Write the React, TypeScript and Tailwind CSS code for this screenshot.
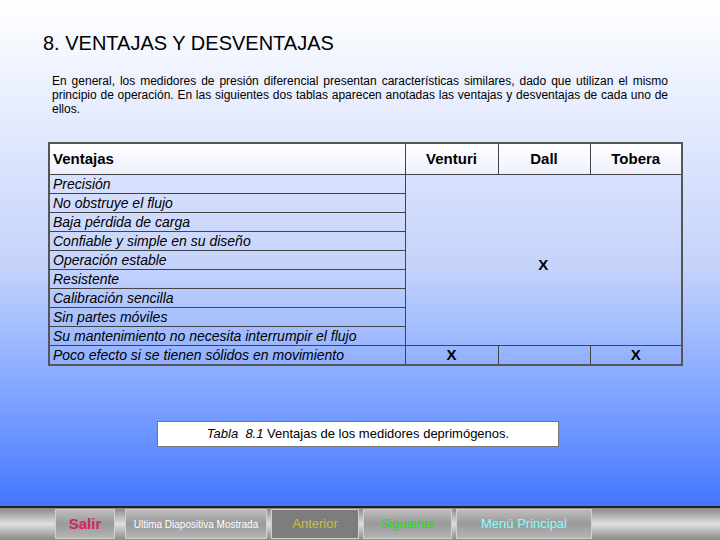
import React from 'react';

const rows = [
  'Precisión',
  'No obstruye el flujo',
  'Baja pérdida de carga',
  'Confiable y simple en su diseño',
  'Operación estable',
  'Resistente',
  'Calibración sencilla',
  'Sin partes móviles',
  'Su mantenimiento no necesita interrumpir el flujo',
];

const btn = 'h-[30px] flex items-center justify-center border border-[#d0d0d0] bg-gradient-to-b from-[#bdbdbd] via-[#9a9a9a] to-[#b5b5b5]';

export default function App() {
  return (
    <div className="w-[720px] h-[540px] flex flex-col bg-gradient-to-b from-white via-[#c4d2fb] to-[#3366ff] overflow-hidden" style={{ fontFamily: '"Liberation Sans", Arial, sans-serif' }}>
      <div className="flex-1 flex flex-col">
        <h1 className="text-[20px] text-black ml-[43px] mt-[31px] leading-6">8. VENTAJAS Y DESVENTAJAS</h1>
        <p className="text-[12px] leading-[14px] text-black mx-[52px] mt-[19px] text-justify">
          En general, los medidores de presión diferencial presentan características similares, dado que utilizan el mismo principio de operación. En las siguientes dos tablas aparecen anotadas las ventajas y desventajas de cada uno de ellos.
        </p>
        <table className="ml-[48px] mt-[26px] w-[635px] border-collapse border-2 border-[#555] text-[14px] italic text-black">
          <thead>
            <tr className="h-[31px] bg-gradient-to-b from-white to-[#eef1fd] not-italic font-bold text-[15px]">
              <th className="text-left pl-[3px] border border-[#444] w-[356px]">Ventajas</th>
              <th className="border border-[#444] w-[93px]">Venturi</th>
              <th className="border border-[#444] w-[92px]">Dall</th>
              <th className="border border-[#444]">Tobera</th>
            </tr>
          </thead>
          <tbody>
            {rows.map((r, i) => (
              <tr key={r} className="h-[19px]">
                <td className="border border-[#444] pl-[3px] leading-[18px]">{r}</td>
                {i === 0 && (
                  <td colSpan={3} rowSpan={9} className="border border-[#444] text-center not-italic font-bold text-[15px] pt-[12px]">X</td>
                )}
              </tr>
            ))}
            <tr className="h-[19px]">
              <td className="border border-[#444] pl-[3px] leading-[18px]">Poco efecto si se tienen sólidos en movimiento</td>
              <td className="border border-[#444] text-center not-italic font-bold text-[15px] leading-[18px]">X</td>
              <td className="border border-[#444]"></td>
              <td className="border border-[#444] text-center not-italic font-bold text-[15px] leading-[18px]">X</td>
            </tr>
          </tbody>
        </table>
        <div className="ml-[157px] mt-[55px] w-[402px] h-[26px] bg-white border border-[#777] flex items-center justify-center text-[13px] text-black">
          <span className="italic">Tabla&nbsp; 8.1</span>&nbsp;Ventajas de los medidores deprimógenos.
        </div>
      </div>
      <div className="h-[34px] border-t-2 border-[#222] bg-gradient-to-b from-[#8a8a8a] via-[#e0e0e0] to-[#8a8a8a] flex items-center pl-[55px] gap-[4px]">
        <div className={`${btn} w-[60px] text-[#d6245a] font-bold text-[15px]`}>Salir</div>
        <div className={`${btn} w-[142px] ml-[6px] text-white text-[10px]`}>Ultima Diapositiva Mostrada</div>
        <div className={`${btn} w-[88px] bg-none bg-[#7d7d7d] text-[#c8c040] text-[13px]`}>Anterior</div>
        <div className={`${btn} w-[89px] text-[#22dd22] text-[13px]`}>Siguiente</div>
        <div className={`${btn} w-[136px] text-[#88ffff] text-[13px]`}>Menú Principal</div>
      </div>
    </div>
  );
}
